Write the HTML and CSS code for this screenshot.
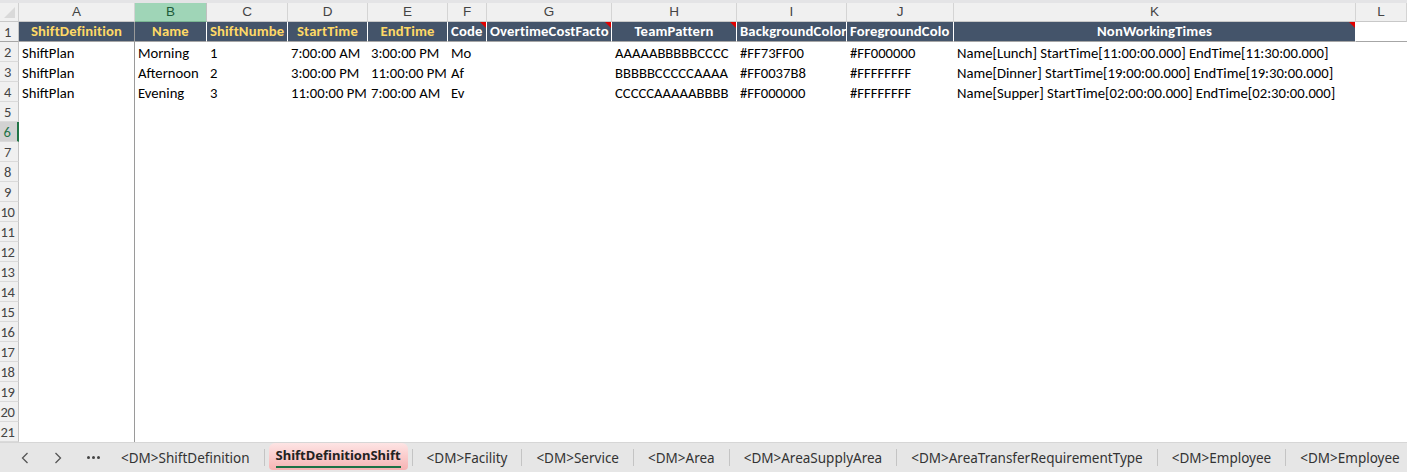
FILE: index.html
```html
<!DOCTYPE html>
<html>
<head>
<meta charset="utf-8">
<link rel="stylesheet" href="styles.css">
</head>
<body>
<div class="app">
  <div class="topstrip"></div>
  <div class="sheet">
    <div class="row colhdr">
      <div class="corner"><span class="tri"></span></div>
      <div class="ch">A</div><div class="ch sel">B</div><div class="ch">C</div><div class="ch">D</div><div class="ch">E</div><div class="ch">F</div><div class="ch">G</div><div class="ch">H</div><div class="ch">I</div><div class="ch">J</div><div class="ch">K</div><div class="ch">L</div>
    </div>
    <div class="row hdr">
      <div class="rh">1</div>
      <div class="hc gold ca frz">ShiftDefinition</div>
      <div class="hc gold ca">Name</div>
      <div class="hc gold">ShiftNumbe</div>
      <div class="hc gold ca">StartTime</div>
      <div class="hc gold ca">EndTime</div>
      <div class="hc cmt">Code<span class="note"></span></div>
      <div class="hc cmt">OvertimeCostFacto<span class="note"></span></div>
      <div class="hc ca cmt">TeamPattern<span class="note"></span></div>
      <div class="hc">BackgroundColor</div>
      <div class="hc">ForegroundColo</div>
      <div class="hc ca cmt">NonWorkingTimes<span class="note"></span></div>
      <div class="hc blank"></div>
    </div>
    <div class="row">
      <div class="rh">2</div>
      <div class="c frz">ShiftPlan</div><div class="c">Morning</div><div class="c">1</div><div class="c">7:00:00 AM</div><div class="c">3:00:00 PM</div><div class="c">Mo</div><div class="c"></div><div class="c">AAAAABBBBBCCCC</div><div class="c">#FF73FF00</div><div class="c">#FF000000</div><div class="c">Name[Lunch] StartTime[11:00:00.000] EndTime[11:30:00.000]</div><div class="c"></div>
    </div>
    <div class="row">
      <div class="rh">3</div>
      <div class="c frz">ShiftPlan</div><div class="c">Afternoon</div><div class="c">2</div><div class="c">3:00:00 PM</div><div class="c">11:00:00 PM</div><div class="c">Af</div><div class="c"></div><div class="c">BBBBBCCCCCAAAA</div><div class="c">#FF0037B8</div><div class="c">#FFFFFFFF</div><div class="c">Name[Dinner] StartTime[19:00:00.000] EndTime[19:30:00.000]</div><div class="c"></div>
    </div>
    <div class="row">
      <div class="rh">4</div>
      <div class="c frz">ShiftPlan</div><div class="c">Evening</div><div class="c">3</div><div class="c">11:00:00 PM</div><div class="c">7:00:00 AM</div><div class="c">Ev</div><div class="c"></div><div class="c">CCCCCAAAAABBBB</div><div class="c">#FF000000</div><div class="c">#FFFFFFFF</div><div class="c">Name[Supper] StartTime[02:00:00.000] EndTime[02:30:00.000]</div><div class="c"></div>
    </div>
    <div class="row"><div class="rh">5</div><div class="c frz"></div></div>
    <div class="row"><div class="rh selrow">6</div><div class="c frz"></div></div>
    <div class="row"><div class="rh">7</div><div class="c frz"></div></div>
    <div class="row"><div class="rh">8</div><div class="c frz"></div></div>
    <div class="row"><div class="rh">9</div><div class="c frz"></div></div>
    <div class="row"><div class="rh">10</div><div class="c frz"></div></div>
    <div class="row"><div class="rh">11</div><div class="c frz"></div></div>
    <div class="row"><div class="rh">12</div><div class="c frz"></div></div>
    <div class="row"><div class="rh">13</div><div class="c frz"></div></div>
    <div class="row"><div class="rh">14</div><div class="c frz"></div></div>
    <div class="row"><div class="rh">15</div><div class="c frz"></div></div>
    <div class="row"><div class="rh">16</div><div class="c frz"></div></div>
    <div class="row"><div class="rh">17</div><div class="c frz"></div></div>
    <div class="row"><div class="rh">18</div><div class="c frz"></div></div>
    <div class="row"><div class="rh">19</div><div class="c frz"></div></div>
    <div class="row"><div class="rh">20</div><div class="c frz"></div></div>
    <div class="row"><div class="rh">21</div><div class="c frz"></div></div>
  </div>
  <div class="tabbar">
    <div class="nav">
      <svg class="chev" width="8" height="12" viewBox="0 0 8 12"><path d="M6.5 1 L1.5 6 L6.5 11" fill="none" stroke="#555" stroke-width="1.3"/></svg>
      <svg class="chev" width="8" height="12" viewBox="0 0 8 12"><path d="M1.5 1 L6.5 6 L1.5 11" fill="none" stroke="#555" stroke-width="1.3"/></svg>
      <span class="dots"><i></i><i></i><i></i></span>
    </div>
    <div class="tab">&lt;DM&gt;ShiftDefinition</div>
    <div class="sep"></div>
    <div class="tab active"><span>ShiftDefinitionShift</span></div>
    <div class="sep"></div>
    <div class="tab">&lt;DM&gt;Facility</div>
    <div class="sep"></div>
    <div class="tab">&lt;DM&gt;Service</div>
    <div class="sep"></div>
    <div class="tab">&lt;DM&gt;Area</div>
    <div class="sep"></div>
    <div class="tab">&lt;DM&gt;AreaSupplyArea</div>
    <div class="sep"></div>
    <div class="tab">&lt;DM&gt;AreaTransferRequirementType</div>
    <div class="sep"></div>
    <div class="tab">&lt;DM&gt;Employee</div>
    <div class="sep"></div>
    <div class="tab">&lt;DM&gt;Employee</div>
  </div>
</div>
</body>
</html>
```
FILE: styles.css
```css
* { box-sizing: border-box; }
html, body { margin: 0; padding: 0; background: #fff; }
.app {
  width: 1407px;
  height: 472px;
  overflow: hidden;
  display: flex;
  flex-direction: column;
  font-family: Carlito, Lato, "Liberation Sans", sans-serif;
  font-size: 14.67px;
  color: #000;
}
.topstrip { height: 3px; background: #e4e4e6; flex: none; }
.sheet { flex: none; height: 439px; }
.row {
  display: grid;
  grid-template-columns: 19px 116px 72px 81px 80px 80px 39px 125px 125px 110px 107px 402px 1fr;
  height: 20px;
}
.row > div { overflow: hidden; white-space: nowrap; }
.colhdr { height: 19px; background: #f0f0f0; }
.corner { position: relative; border-right: 1px solid #d0d0d0; border-bottom: 1px solid #c8c8c8; }
.corner .tri {
  position: absolute; right: 3px; bottom: 3px; width: 11px; height: 11px;
  background: #d9d9d9; clip-path: polygon(100% 0, 100% 100%, 0 100%);
}
.ch {
  text-align: center;
  font-family: "Liberation Sans", Arial, sans-serif;
  font-size: 13.5px;
  line-height: 18px;
  color: #444;
  border-right: 1px solid #d4d4d4;
  border-bottom: 1px solid #c8c8c8;
}
.ch.sel { background: #9fd5b7; color: #1d5b3a; border-right-color: #c0c0c0; border-bottom: 1px solid #7bb694; }
.rh {
  background: #f0f0f0;
  border-right: 1px solid #c4c4c4;
  border-bottom: 1px solid #dadada;
  font-size: 14.5px;
  line-height: 20px;
  color: #444;
  text-align: center;
  padding-right: 3px;
  letter-spacing: -0.3px;
}
.rh.selrow { background: #d2d2d2; color: #217346; border-right: 2px solid #217346; }
.hdr > .rh { line-height: 20px; border-bottom: 1px solid #a6a6a6; }
.hc {
  background: #44546a;
  color: #fff;
  font-weight: bold;
  line-height: 19px;
  padding-left: 3px;
  border-right: 1px solid #fff;
  border-bottom: 1px solid #a6a6a6;
  position: relative;
  letter-spacing: 0.15px;
}
.hc.gold { color: #ffd966; }
.hc.ca { text-align: center; padding-left: 0; }
.hc.frz { border-right-color: #9a9a9a; }
.hc.blank { background: #fff; border-right: none; }
.note {
  position: absolute; top: 0; right: 0; width: 6px; height: 6px;
  background: #e00000; clip-path: polygon(0 0, 100% 0, 100% 100%);
}
.c {
  line-height: 22px;
  padding-left: 3px;
}
.c.frz { border-right: 1px solid #9a9a9a; }

.tabbar {
  flex: 1;
  background: #e6e6e6;
  border-top: 1px solid #d6d6d6;
  display: flex;
  align-items: center;
  font-family: "Noto Sans", "Open Sans", sans-serif;
  font-size: 13.5px;
  color: #333;
  white-space: nowrap;
}
.nav { display: flex; align-items: center; width: 107px; padding-left: 21px; gap: 25px; flex: none; }
.dots { display: flex; gap: 2px; }
.dots i { width: 3px; height: 3px; background: #444; border-radius: 50%; display: block; }
.tab { padding: 0 14px; line-height: 28px; flex: none; }
.sep { width: 1px; height: 17px; background: #c4c4c4; flex: none; }
.tab.active {
  margin: 0 4px;
  padding: 0 7px;
  height: 27px;
  align-self: flex-end;
  margin-bottom: 2px;
  border-radius: 6px 6px 4px 4px;
  background: linear-gradient(#fde4e4, #f7b3b3);
  font-weight: bold;
  font-size: 13px;
  color: #222;
  line-height: 25px;
}
.tab.active span { display: inline-block; border-bottom: 2px solid #1e7145; line-height: 21px; }
```
